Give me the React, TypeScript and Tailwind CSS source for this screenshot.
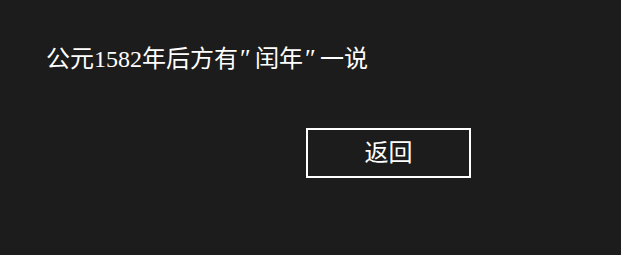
import React from "react";

export default function App() {
  return (
    <div
      className="w-[621px] h-[255px] bg-[#1c1c1c] text-white flex flex-col"
      style={{ fontFamily: '"Liberation Serif", "Noto Sans CJK SC", serif' }}
    >
      <div className="pt-[43px] pl-[46px] text-[24px] leading-[32px] text-white whitespace-nowrap">
        公元1582年后方有<span className="inline-block w-[17px] pl-[2px] text-[26px]">″</span>闰年<span className="inline-block w-[17px] pl-[2px] text-[26px]">″</span>一说
      </div>
      <div className="mt-[53px] flex justify-end pr-[150px]">
        <button className="w-[165px] h-[50px] border-2 border-white flex items-center justify-center text-[24px] leading-none text-white">
          返回
        </button>
      </div>
    </div>
  );
}
